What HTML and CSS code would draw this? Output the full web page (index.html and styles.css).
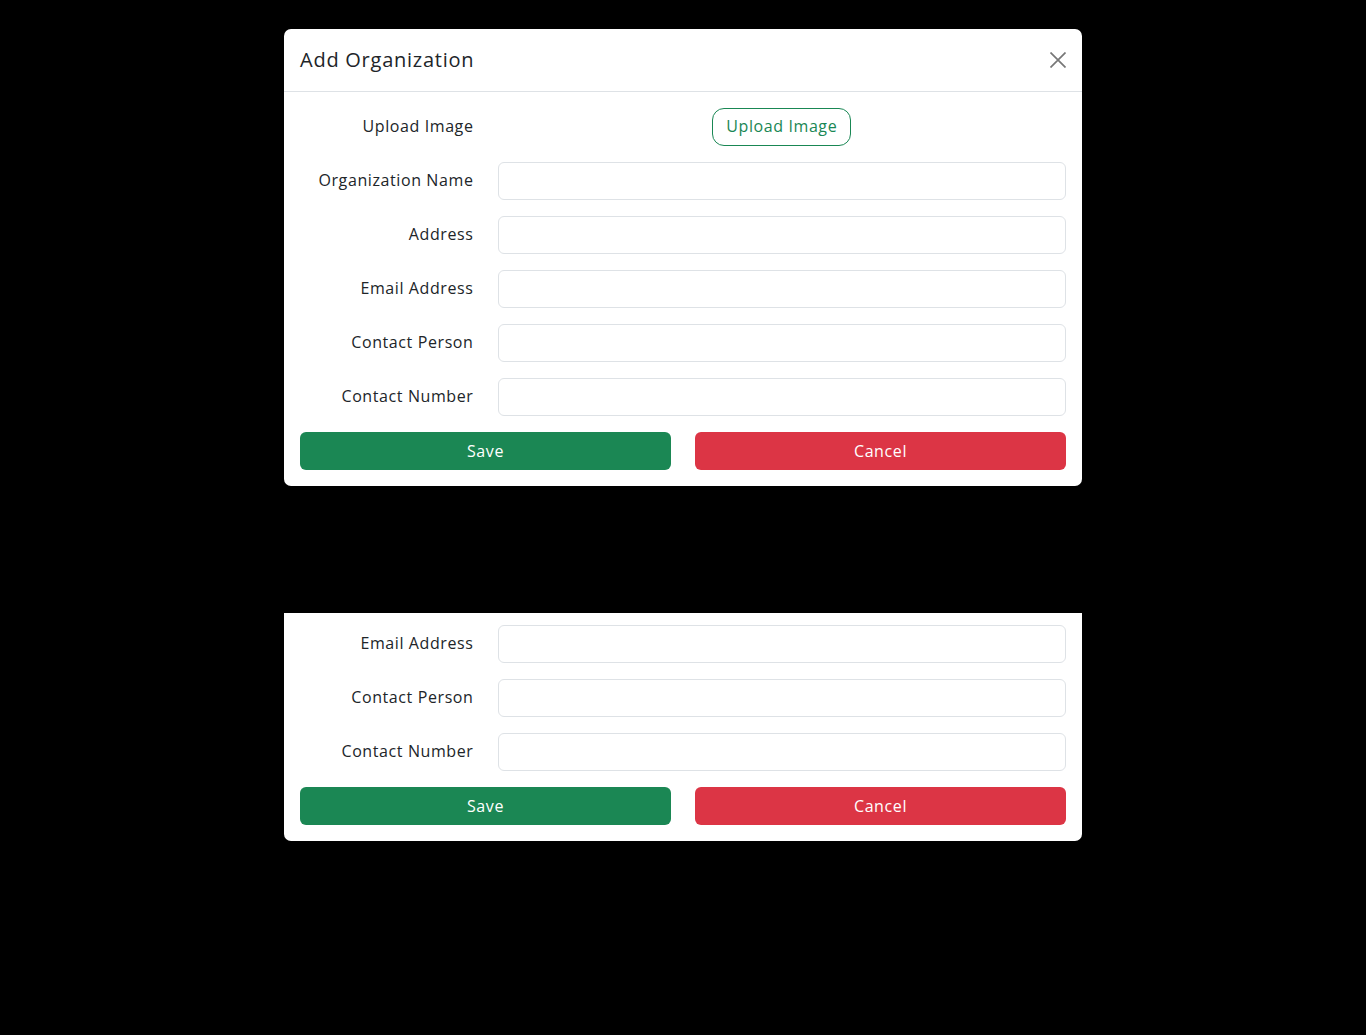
FILE: index.html
```html
<!DOCTYPE html>
<html>
<head>
    <title>Add Organization</title>
    <link rel="stylesheet" href="styles.css">
</head>
<body>
    <div class="modal">
        <div class="modal-header">
            <h5 class="modal-title">Add Organization</h5>
            <button class="btn-close" aria-label="Close">
                <svg width="16" height="16" viewBox="0 0 16 16"><path d="M0.5 0.5L15.5 15.5M15.5 0.5L0.5 15.5" stroke="#777" stroke-width="1.7" fill="none"/></svg>
            </button>
        </div>
        <div class="modal-body">
            <div class="row">
                <label class="col-label">Upload Image</label>
                <div class="col-field center">
                    <button class="btn-upload">Upload Image</button>
                </div>
            </div>
            <div class="row">
                <label class="col-label">Organization Name</label>
                <div class="col-field"><input type="text" class="form-control"></div>
            </div>
            <div class="row">
                <label class="col-label">Address</label>
                <div class="col-field"><input type="text" class="form-control"></div>
            </div>
            <div class="row">
                <label class="col-label">Email Address</label>
                <div class="col-field"><input type="text" class="form-control"></div>
            </div>
            <div class="row">
                <label class="col-label">Contact Person</label>
                <div class="col-field"><input type="text" class="form-control"></div>
            </div>
            <div class="row">
                <label class="col-label">Contact Number</label>
                <div class="col-field"><input type="text" class="form-control"></div>
            </div>
            <div class="actions">
                <button class="btn btn-save">Save</button>
                <button class="btn btn-cancel">Cancel</button>
            </div>
        </div>
    </div>

    <div class="modal modal-lower">
        <div class="modal-body">
            <div class="row">
                <label class="col-label">Email Address</label>
                <div class="col-field"><input type="text" class="form-control"></div>
            </div>
            <div class="row">
                <label class="col-label">Contact Person</label>
                <div class="col-field"><input type="text" class="form-control"></div>
            </div>
            <div class="row">
                <label class="col-label">Contact Number</label>
                <div class="col-field"><input type="text" class="form-control"></div>
            </div>
            <div class="actions">
                <button class="btn btn-save">Save</button>
                <button class="btn btn-cancel">Cancel</button>
            </div>
        </div>
    </div>
</body>
</html>
```

FILE: styles.css
```css
body {
    margin: 0;
    background-color: #000;
    font-family: "Open Sans", "Liberation Sans", sans-serif;
    color: #212529;
    padding-top: 29px;
    letter-spacing: 0.6px;
}

.modal {
    width: 798px;
    margin: 0 auto;
    background-color: #fff;
    border-radius: 7px;
}

.modal-lower {
    margin-top: 127px;
    border-radius: 0 0 7px 7px;
}

.modal-lower .modal-body {
    padding-top: 12px;
}

.modal-header {
    display: flex;
    align-items: center;
    justify-content: space-between;
    padding: 16px;
    border-bottom: 1px solid #dee2e6;
}

.modal-title {
    margin: 0;
    font-size: 20px;
    font-weight: 400;
    line-height: 30px;
    letter-spacing: 0.75px;
}

.btn-close {
    border: 0;
    background: none;
    padding: 0;
    width: 16px;
    height: 16px;
    display: flex;
    align-items: center;
    justify-content: center;
    cursor: pointer;
}

.modal-body {
    padding: 16px;
}

.row {
    display: grid;
    grid-template-columns: 173.5px 1fr;
    column-gap: 24px;
    align-items: center;
    margin-bottom: 16px;
}

.col-label {
    text-align: right;
    font-size: 16px;
    line-height: 24px;
    margin-top: -2px;
}

.col-field.center {
    display: flex;
    justify-content: center;
}

.form-control {
    display: block;
    width: 100%;
    box-sizing: border-box;
    height: 38px;
    border: 1px solid #dee2e6;
    border-radius: 6px;
    padding: 6px 12px;
    font-size: 16px;
    font-family: inherit;
}

.btn-upload {
    height: 38px;
    padding: 0 13px 2px;
    border: 1px solid #198754;
    border-radius: 12px;
    background: #fff;
    color: #198754;
    font-family: inherit;
    font-size: 16px;
    letter-spacing: 0.6px;
}

.actions {
    display: grid;
    grid-template-columns: 1fr 1fr;
    column-gap: 24px;
}

.btn {
    height: 38px;
    padding-bottom: 2px;
    border: 0;
    border-radius: 6px;
    color: #fff;
    font-family: inherit;
    font-size: 16px;
    font-weight: 500;
    letter-spacing: 0.6px;
}

.btn-save {
    background-color: #1b8754;
}

.btn-cancel {
    background-color: #dc3545;
}
```
